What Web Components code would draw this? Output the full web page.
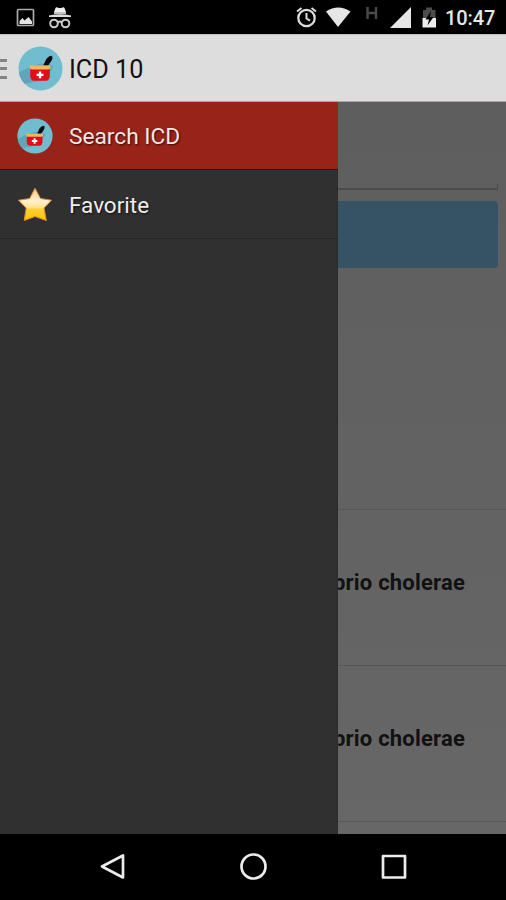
<!DOCTYPE html>
<html lang="en"><head><meta charset="utf-8"><title>ICD 10</title>
<style>html,body{margin:0;height:900px;overflow:hidden;background:#000}body{font-family:Roboto,"Liberation Sans",sans-serif}</style></head>
<body><icd-app></icd-app>
<script>
const define=(name,html)=>{const t=document.createElement('template');t.innerHTML=html;
customElements.define(name,class extends HTMLElement{constructor(){super();this.attachShadow({mode:'open'}).append(t.content.cloneNode(true))}})};

define('mortar-icon',`<style>:host{display:block;flex:none}svg{display:block;width:100%;height:100%}</style>
<svg viewBox="0 0 46 46"><defs><clipPath id="c"><circle cx="23" cy="23" r="22.5"/></clipPath></defs>
<circle cx="23" cy="23" r="22.5" fill="#70bdd0"/><path clip-path="url(#c)" d="M1 32L1 27Q16 18 31 17L36 21L30 34L20 36L5 39Z" fill="#5fa6ba"/>
<path d="M26.500 19.500L29.300 13.500Q31 10.500 34.500 10.500Q35.300 13 33.500 15.500L30.500 19.500Z" fill="#090b10" stroke="#090b10" stroke-width="1" stroke-linejoin="round"/>
<path d="M12.500 23H32.500V31Q32 35.500 28.500 35.500H16.500Q13 35.500 12.500 31Z" fill="#e40c18"/>
<path d="M12 20H33Q34.300 23.800 31 24H14Q10.800 23.800 12 20Z" fill="#edb75c"/>
<path d="M22.500 26v7M19 29.500h7" stroke="#fff" stroke-width="2.500"/></svg>`);

define('star-icon',`<style>:host{display:block;flex:none}svg{display:block;width:100%;height:100%}</style>
<svg viewBox="0 0 36 36"><defs><linearGradient id="g" x2="0" y2="1"><stop stop-color="#ffc982"/><stop offset=".4" stop-color="#fff0d0"/><stop offset=".6" stop-color="#ffe38a"/><stop offset=".66" stop-color="#ffcf30"/><stop offset="1" stop-color="#ffc400"/></linearGradient></defs>
<path d="M18 2.200L23.500 12.500L34.500 14.200L27 22L29.300 34.500L18 30.500L7.200 34.500L9.200 22L1.500 14.200L12.700 12.500Z" fill="url(#g)" stroke="#dc8a38" stroke-width="1" stroke-linejoin="round"/></svg>`);

define('status-bar',`<style>:host{display:block;height:34px;background:#000;color:#e6e6e6}.row{display:flex;align-items:center;height:34px;box-sizing:border-box;padding:0 11px 0 16px}svg{display:block;flex:none}.gap{flex:1}
time{font-size:20px;font-weight:500;line-height:34px;padding-top:2px;width:50px;margin-left:8px;white-space:nowrap;letter-spacing:-.1px}</style>
<div class="row">
<svg width="60" height="34" viewBox="16 0 60 34"><rect x="17.500" y="9.500" width="16" height="16" rx="1" fill="none" stroke="#aaa" stroke-width="1.700"/><path d="M19.500 24V21L22.500 18L24.500 20.500L28.500 17L32 21.500V24Z" fill="#e4e4e4"/>
<path d="M54 12L55.500 8Q56 7 57.500 7.500Q60 8.500 62.500 7.500Q64 7 64.500 8L66 12V14H54Z" fill="#eee"/><path d="M54 13h12" stroke="#999" stroke-width="1"/><path d="M49 17V15.500Q60 12.800 71 15.500V17Z" fill="#ddd"/><g fill="none" stroke="#ccc" stroke-width="2"><circle cx="54" cy="23.500" r="3.800"/><circle cx="65.500" cy="23.500" r="3.800"/><path d="M57.700 22.500Q60 20.500 61.800 22.500"/></g></svg>
<span class="gap"></span>
<svg width="142" height="34" viewBox="295 0 142 34"><g fill="none" stroke="#ddd" stroke-width="2"><circle cx="306.500" cy="18" r="8.200" stroke-width="2.300"/><path d="M306.500 13V18.500L310 20.700M297 11.500L301.500 8M316 11.500L311.500 8"/></g>
<path d="M326 11.500Q338 3.500 350.500 11.500L338 27Z" fill="#e6e6e6"/><path d="M367.500 7V19M376 7V19M367.500 13H376" stroke="#484848" stroke-width="2.500" fill="none"/>
<path d="M390 28L411 7V28Z" fill="#e6e6e6"/><path d="M423 10H426V7.500H432V10H435.500V18H423Z" fill="#4c4c4c"/><path d="M422.500 18H436V27.500H422.500Z" fill="#eee"/><path d="M431 11L425.500 19.500H429L427.500 25.500L433.500 17H430Z" fill="#000"/></svg>
<time>10:47</time></div>`);

define('action-bar',`<style>:host{display:flex;align-items:center;height:68px;box-sizing:border-box;background:#ddd;border-top:1px solid #c2c2c2;border-bottom:1px solid #b0a8a8}.menu{flex:none;display:flex;flex-direction:column;gap:5.500px;width:18px;padding-top:1px}.menu i{width:7px;height:3px;background:#858585}mortar-icon{width:45px;height:46px;padding-top:1px;box-sizing:border-box}h1{margin:4px 0 0 6px;font:400 25.200px/36px Roboto,sans-serif;color:#111}</style><div class="menu"><i></i><i></i><i></i></div><mortar-icon></mortar-icon><h1><slot></slot></h1>`);

define('drawer-item',`<style>:host{display:flex;align-items:center;height:69px;box-sizing:border-box;padding-left:17px;border-bottom:1px solid #252525;color:#eee;font-size:22.500px;text-shadow:1px 1px 2px #000a}:host([active]){height:68px;background:#982318;border-bottom-color:#171f1d;color:#f6e6e4;font-size:22.700px}.icon{width:52px;flex:none}::slotted(*){width:36px;height:36px}::slotted(span){width:auto;height:auto;padding-top:2px}</style><div class="icon"><slot name="icon"></slot></div><slot></slot>`);

define('side-drawer',`<style>:host{display:block;width:338px;flex:none;background:#303030;box-sizing:border-box;border-right:1px solid #2b2b2b}drawer-item{margin-right:-1px}</style>
<drawer-item active><mortar-icon slot="icon"></mortar-icon><span>Search ICD</span></drawer-item><drawer-item><star-icon slot="icon"></star-icon><span>Favorite</span></drawer-item>`);

define('result-row',`<style>:host{display:flex;justify-content:flex-end;align-items:center;height:156px;box-sizing:border-box;padding:0 41px 11px 0;overflow:hidden;border-bottom:1px solid #575757;color:#111;font-size:22px;font-weight:700;letter-spacing:.2px;white-space:nowrap}</style><span><slot></slot></span>`);

define('search-content',`<style>:host{display:block;flex:1;min-width:0;overflow:hidden;background:linear-gradient(#5e5e5e,#626262 50%,#676767)}.field{height:88px;box-sizing:border-box;margin-right:8px;border-bottom:2px solid #4b4b4b;position:relative}.field:after{content:"";position:absolute;right:0;bottom:0;width:1px;height:4px;background:#4b4b4b}.button{height:67px;margin:10.500px 8px 0 0;background:#365365;border-radius:0 4px 4px 0}.space{height:242.500px;box-sizing:border-box;border-bottom:1px solid #575757}</style>
<div class="field"></div><div class="button"></div><div class="space"></div><result-row>brio cholerae</result-row><result-row>brio cholerae</result-row>`);

define('nav-bar',`<style>:host{display:grid;grid-template-columns:repeat(3,28px);justify-content:center;column-gap:112.500px;align-items:center;height:66px;background:#000;box-sizing:border-box;padding-left:1px}svg{display:block;width:28px;height:28px;fill:none;stroke:#ececec;stroke-width:2.700;stroke-linejoin:round}</style>
<svg viewBox="0 0 28 28"><path d="M3 13.500L24 2.500V24.500Z"/></svg><svg viewBox="0 0 28 28"><circle cx="13.500" cy="13.500" r="12"/></svg><svg viewBox="0 0 28 28"><rect x="3" y="3" width="22" height="21.500"/></svg>`);

define('icd-app',`<style>:host{display:flex;flex-direction:column;width:506px;height:900px}main{display:flex;flex:1;min-height:0}</style>
<status-bar></status-bar><action-bar>ICD 10</action-bar><main><side-drawer></side-drawer><search-content></search-content></main><nav-bar></nav-bar>`);
</script></body></html>
